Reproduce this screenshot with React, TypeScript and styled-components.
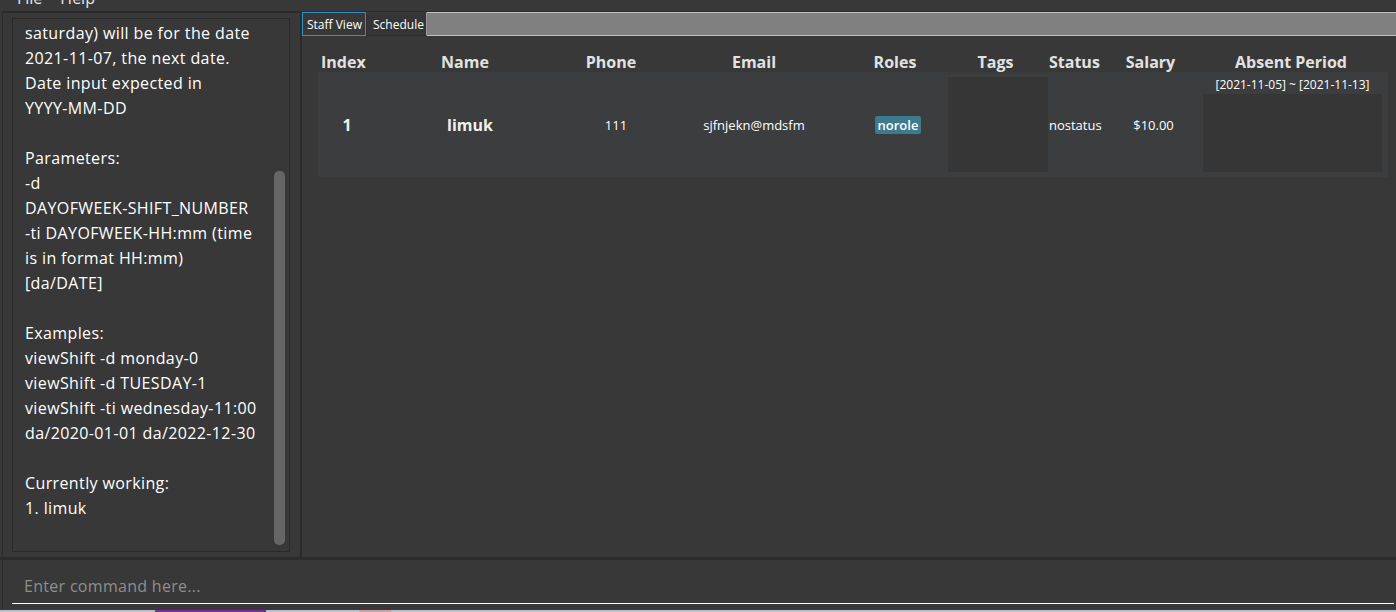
import React from "react";
import styled, { createGlobalStyle } from "styled-components";

const GlobalStyle = createGlobalStyle`
  html, body { margin: 0; padding: 0; background: #383838; }
  body { font-family: "Open Sans", "Noto Sans", sans-serif; }
  * { box-sizing: border-box; }
`;

const Window = styled.div`
  width: 1396px;
  height: 612px;
  display: flex;
  flex-direction: column;
  background: #383838;
  overflow: hidden;
  color: #ffffff;
  font-family: "Open Sans", "Noto Sans", sans-serif;
`;

const MenuBar = styled.div`
  flex: none;
  height: 11px;
  display: flex;
  align-items: flex-start;
  gap: 18px;
  padding-left: 17px;
  overflow: hidden;
`;

const MenuItem = styled.span`
  font-size: 16px;
  line-height: 20px;
  margin-top: -12px;
  color: #e8e8e8;
`;

const Main = styled.div`
  flex: none;
  height: 546px;
  display: flex;
  border-top: 1px solid #2b2b2b;
  margin-left: 2px;
`;

const LeftPane = styled.div`
  flex: none;
  width: 298px;
  border-left: 1px solid #2c2c2c;
  border-top: 1px solid #2b2b2b;
  padding: 5px 10px 5px 9px;
  display: flex;
`;

const ResultBox = styled.div`
  flex: 1;
  display: flex;
  border: 1px solid #2a2a2a;
  background: #383838;
`;

const ResultText = styled.div`
  flex: 1;
  padding: 2px 0 0 12px;
  font-size: 16px;
  letter-spacing: 0.38px;
  line-height: 25px;
  white-space: pre;
  color: #ffffff;
  overflow: hidden;
`;

const ScrollTrack = styled.div`
  flex: none;
  width: 15px;
  padding: 0 4px 6px 0;
  display: flex;
  flex-direction: column;
  justify-content: flex-end;
`;

const ScrollThumb = styled.div`
  height: 374px;
  border-radius: 5px;
  background: #666666;
`;

const VSplit = styled.div`
  flex: none;
  width: 2px;
  background: #2b2b2b;
`;

const RightPane = styled.div`
  flex: 1;
  display: flex;
  flex-direction: column;
  min-width: 0;
`;

const TabBar = styled.div`
  flex: none;
  height: 24px;
  display: flex;
  background: #808080;
`;

const Tab = styled.div<{ $active?: boolean; $w: number }>`
  flex: none;
  width: ${(p) => p.$w}px;
  height: 24px;
  background: ${(p) => (p.$active ? "#383838" : "#353535")};
  border: 1px solid ${(p) => (p.$active ? "#3591c2" : "#2e2e2e")};
  ${(p) => (p.$active ? "" : "border-top-color: #3a3a3a; border-right-color: #9a9a9a;")}
  padding-left: ${(p) => (p.$active ? 4 : 6)}px;
  font-size: 12px;
  line-height: 23px;
  color: #ffffff;
`;

const TabFill = styled.div`
  flex: 1;
  border-top: 1px solid #c2c2c2;
  border-bottom: 1px solid #c2c2c2;
`;

const Content = styled.div`
  flex: 1;
  padding: 15px 8px 0 16px;
`;

const HeaderRow = styled.div`
  display: flex;
  height: 21px;
  align-items: flex-start;
`;

const HeadCell = styled.div<{ $w: number; $align?: string; $pl?: number; $pr?: number }>`
  flex: none;
  width: ${(p) => p.$w}px;
  text-align: ${(p) => p.$align || "center"};
  padding-left: ${(p) => p.$pl || 0}px;
  padding-right: ${(p) => p.$pr || 0}px;
  font-size: 16px;
  font-weight: 700;
  line-height: 22px;
  color: #e2e2e2;
  white-space: nowrap;
`;

const DataRow = styled.div`
  display: flex;
  height: 105px;
  padding: 5px 0;
  background: #3c3d3f;
  align-items: center;
`;

const Cell = styled.div<{ $w: number; $align?: string; $pl?: number; $bold?: boolean; $size?: number }>`
  flex: none;
  width: ${(p) => p.$w}px;
  text-align: ${(p) => p.$align || "center"};
  padding-left: ${(p) => p.$pl || 0}px;
  font-size: ${(p) => p.$size || 13}px;
  font-weight: ${(p) => (p.$bold ? 700 : 400)};
  color: ${(p) => (p.$bold ? "#f0f0f0" : "#ffffff")};
  white-space: nowrap;
`;

const Badge = styled.span`
  display: inline-block;
  background: #3d7a8d;
  border-radius: 2px;
  padding: 0 3px;
  height: 18px;
  line-height: 18px;
  font-size: 13px;
  font-weight: 600;
  color: #ffffff;
`;

const TagBox = styled.div`
  flex: none;
  width: 100px;
  align-self: stretch;
  background: #363636;
`;

const AbsentCell = styled.div`
  flex: none;
  width: 196px;
  align-self: stretch;
  display: flex;
  flex-direction: column;
  padding-left: 11px;
  padding-right: 6px;
`;

const AbsentText = styled.div`
  font-size: 12px;
  line-height: 16px;
  text-align: center;
  color: #ffffff;
  white-space: nowrap;
`;

const AbsentBox = styled.div`
  flex: 1;
  margin-top: 1px;
  background: #363636;
`;

const HSplit = styled.div`
  flex: none;
  height: 3px;
  background: #2c2c2c;
`;

const CommandArea = styled.div`
  flex: none;
  height: 50px;
  margin-left: 2px;
  border-left: 1px solid #2c2c2c;
  padding: 0 2px 6px 9px;
`;

const CommandInput = styled.input`
  width: 100%;
  height: 44px;
  border: none;
  border-bottom: 1px solid #ffffff;
  background: transparent;
  outline: none;
  padding: 9px 0 0 12px;
  font-family: "Open Sans", "Noto Sans", sans-serif;
  font-size: 16px;
  letter-spacing: 0.3px;
  color: #ffffff;
  &::placeholder { color: #8e8e8e; }
`;

const Taskbar = styled.div`
  flex: none;
  height: 2px;
  display: flex;
  background: #b8bfcc;
`;

const TaskSeg = styled.div<{ $w: number; $c: string }>`
  flex: none;
  width: ${(p) => p.$w}px;
  background: ${(p) => p.$c};
`;

const lines = [
  "saturday) will be for the date",
  "2021-11-07, the next date.",
  "Date input expected in",
  "YYYY-MM-DD",
  "",
  "Parameters:",
  "-d",
  "DAYOFWEEK-SHIFT_NUMBER",
  "-ti DAYOFWEEK-HH:mm (time",
  "is in format HH:mm)",
  "[da/DATE]",
  "",
  "Examples:",
  "viewShift -d monday-0",
  "viewShift -d TUESDAY-1",
  "viewShift -ti wednesday-11:00",
  "da/2020-01-01 da/2022-12-30",
  "",
  "Currently working:",
  "1. limuk",
];

export default function App() {
  return (
    <>
      <GlobalStyle />
      <Window>
        <MenuBar>
          <MenuItem>File</MenuItem>
          <MenuItem>Help</MenuItem>
        </MenuBar>
        <Main>
          <LeftPane>
            <ResultBox>
              <ResultText>{lines.join("\n")}</ResultText>
              <ScrollTrack>
                <ScrollThumb />
              </ScrollTrack>
            </ResultBox>
          </LeftPane>
          <VSplit />
          <RightPane>
            <TabBar>
              <Tab $active $w={64}>Staff View</Tab>
              <Tab $w={61}>Schedule</Tab>
              <TabFill />
            </TabBar>
            <Content>
              <HeaderRow>
                <HeadCell $w={58} $align="left" $pl={3}>Index</HeadCell>
                <HeadCell $w={178}>Name</HeadCell>
                <HeadCell $w={114}>Phone</HeadCell>
                <HeadCell $w={172}>Email</HeadCell>
                <HeadCell $w={108} $pl={2}>Roles</HeadCell>
                <HeadCell $w={100} $pr={5}>Tags</HeadCell>
                <HeadCell $w={64} $align="left" $pl={1}>Status</HeadCell>
                <HeadCell $w={80} $pr={3}>Salary</HeadCell>
                <HeadCell $w={196} $pl={2}>Absent Period</HeadCell>
              </HeaderRow>
              <DataRow>
                <Cell $w={58} $bold $size={16}>1</Cell>
                <Cell $w={178} $bold $size={16} $pl={10}>limuk</Cell>
                <Cell $w={114} $pl={10}>111</Cell>
                <Cell $w={172}>sjfnjekn@mdsfm</Cell>
                <Cell $w={108} $pl={8}>
                  <Badge>norole</Badge>
                </Cell>
                <TagBox />
                <Cell $w={64} $align="left" $pl={1}>nostatus</Cell>
                <Cell $w={80} $pl={3}>$10.00</Cell>
                <AbsentCell>
                  <AbsentText>[2021-11-05] ~ [2021-11-13]</AbsentText>
                  <AbsentBox />
                </AbsentCell>
              </DataRow>
            </Content>
          </RightPane>
        </Main>
        <HSplit />
        <CommandArea>
          <CommandInput placeholder="Enter command here..." />
        </CommandArea>
        <Taskbar>
          <TaskSeg $w={155} $c="#b8bfcc" />
          <TaskSeg $w={111} $c="#7d2b9c" />
          <TaskSeg $w={93} $c="#b8bfcc" />
          <TaskSeg $w={32} $c="#c9a1a8" />
        </Taskbar>
      </Window>
    </>
  );
}
